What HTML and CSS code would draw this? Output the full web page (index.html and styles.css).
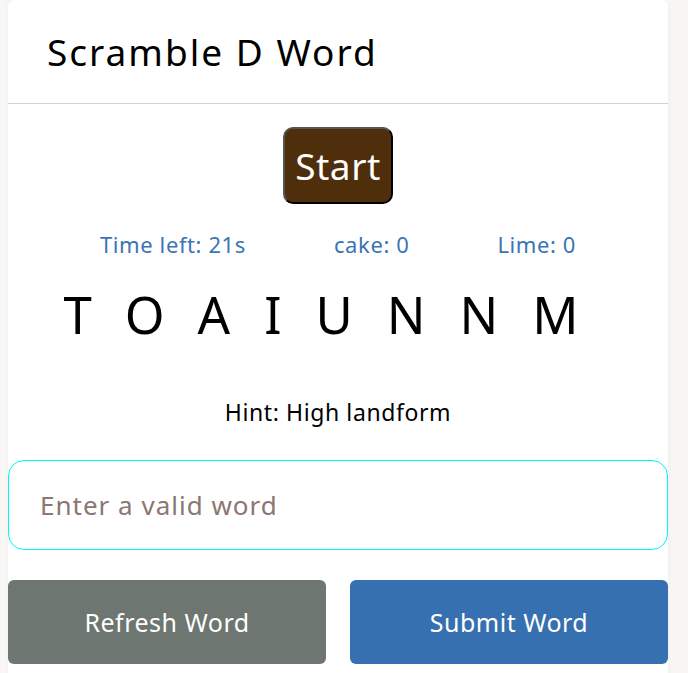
FILE: index.html
```
<!DOCTYPE html>
<html lang="en">
<head>
<meta charset="utf-8">
<title>Scramble D Word</title>
<link rel="stylesheet" href="styles.css">
</head>
<body>
<div class="card">
  <header class="card-header">
    <h1 class="title">Scramble D Word</h1>
  </header>
  <main class="game">
    <button class="start-btn" type="button">Start</button>
    <div class="stats">
      <span class="stat">Time left: 21s</span>
      <span class="stat">cake: 0</span>
      <span class="stat">Lime: 0</span>
    </div>
    <p class="word">TOAIUNNM</p>
    <p class="hint">Hint: High landform</p>
    <input class="word-input" type="text" placeholder="Enter a valid word">
    <div class="actions">
      <button class="action refresh" type="button">Refresh Word</button>
      <button class="action submit" type="button">Submit Word</button>
    </div>
  </main>
</div>
</body>
</html>
```
FILE: styles.css
```
html, body {
  margin: 0;
  padding: 0;
}
body {
  background: #f9f7f5;
  font-family: "Noto Sans", "Open Sans", sans-serif;
  padding-left: 8px;
  height: 673px;
  overflow: hidden;
}
.card {
  width: 660px;
  background: #ffffff;
  border-radius: 6px 6px 0 0;
  min-height: 700px;
  box-shadow: 0 0 6px rgba(0, 0, 0, 0.04);
}
.card-header {
  height: 103px;
  display: flex;
  align-items: center;
  padding: 0 39px;
  border-bottom: 1px solid #c8d7dc;
}
.title {
  margin: 0;
  font-size: 37px;
  font-weight: 400;
  color: #000;
  letter-spacing: 2px;
}
.game {
  display: flex;
  flex-direction: column;
  align-items: center;
}
.start-btn {
  margin-top: 23px;
  width: 110px;
  height: 77px;
  background: #4f2e0b;
  color: #ffffff;
  font-family: inherit;
  font-size: 37px;
  border: 2px solid;
  border-color: #555555 #000000 #000000 #555555;
  border-radius: 10px;
  padding: 0;
  letter-spacing: 0.5px;
}
.stats {
  margin-top: 25px;
  display: flex;
  gap: 88px;
  justify-content: center;
}
.stat {
  color: #3a74b5;
  font-size: 22px;
  line-height: 30px;
  letter-spacing: 0.6px;
}
.word {
  margin: 23px 0 0;
  font-size: 51px;
  line-height: 64px;
  letter-spacing: 34px;
  color: #000;
}
.hint {
  margin: 51px 0 0;
  font-size: 23px;
  line-height: 30px;
  letter-spacing: 0.6px;
  color: #000;
}
.word-input {
  margin-top: 33px;
  box-sizing: border-box;
  width: 100%;
  height: 90px;
  border: 1px solid #00f5f5;
  border-radius: 16px;
  padding: 0 31px;
  font-family: inherit;
  font-size: 26px;
  letter-spacing: 1px;
  outline: none;
}
.word-input::placeholder {
  color: #8c7672;
}
.actions {
  margin-top: 30px;
  width: 100%;
  display: flex;
  gap: 24px;
}
.action {
  flex: 1;
  height: 84px;
  border: none;
  border-radius: 6px;
  color: #ffffff;
  font-family: inherit;
  font-size: 25px;
  letter-spacing: 0.5px;
}
.refresh {
  background: #6d7670;
}
.submit {
  background: #3670b0;
}
```
